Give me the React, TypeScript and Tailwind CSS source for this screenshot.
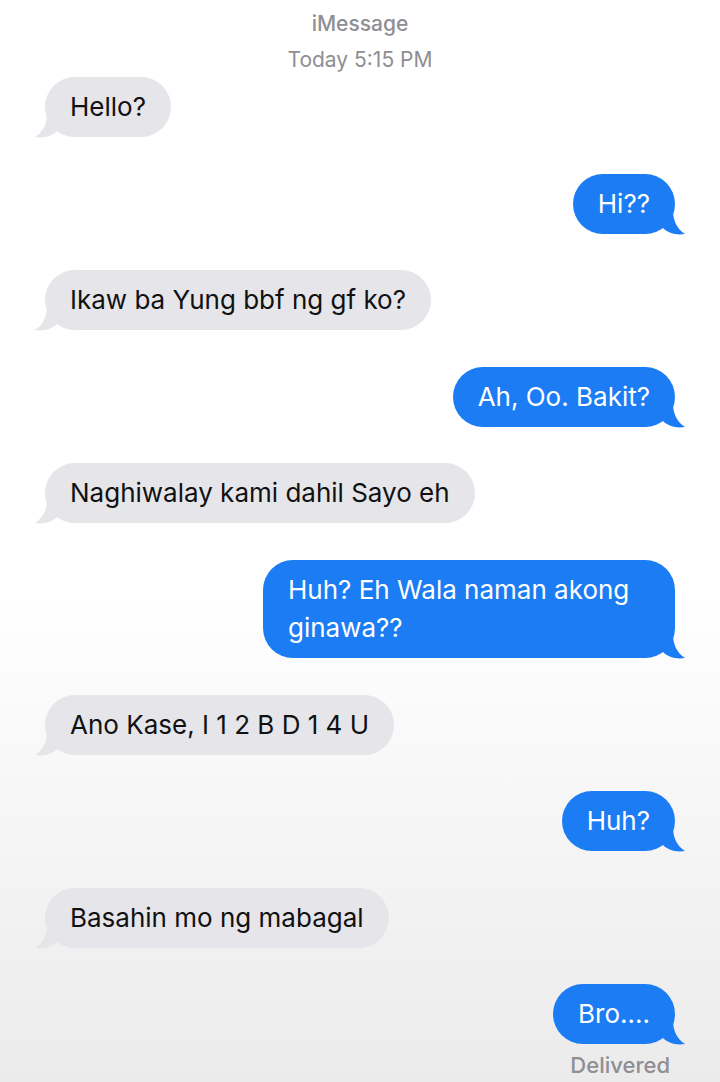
const MESSAGES = [
  { from: "them", text: "Hello?" },
  { from: "me", text: "Hi??" },
  { from: "them", text: "Ikaw ba Yung bbf ng gf ko?" },
  { from: "me", text: "Ah, Oo. Bakit?" },
  { from: "them", text: "Naghiwalay kami dahil Sayo eh" },
  { from: "me", text: "Huh? Eh Wala naman akong ginawa??" },
  { from: "them", text: "Ano Kase, I 1 2 B D 1 4 U" },
  { from: "me", text: "Huh?" },
  { from: "them", text: "Basahin mo ng mabagal" },
  { from: "me", text: "Bro...." },
];

function Tail({ side }: { side: "left" | "right" }) {
  if (side === "left") {
    return (
      <svg
        className="absolute -left-[10px] -bottom-[2px]"
        width="26"
        height="26"
        viewBox="0 0 26 26"
      >
        <path d="M12 0 C12 11 8 19 0 24 C9 25.5 17 23 22 18 L26 0 Z" fill="#e5e5ea" />
      </svg>
    );
  }
  return (
    <svg
      className="absolute -right-[10px] -bottom-[2px]"
      width="26"
      height="26"
      viewBox="0 0 26 26"
    >
      <path d="M14 0 C14 11 18 19 26 24 C17 25.5 9 23 4 18 L0 0 Z" fill="#1b7cf4" />
    </svg>
  );
}

export default function App() {
  return (
    <div
      className="min-h-[1082px] w-[720px] bg-linear-to-b from-white from-55% to-[#ebebeb] pt-[10px]"
      style={{ fontFamily: "Inter, 'Liberation Sans', sans-serif" }}
    >
      {/* Header */}
      <div className="text-center text-[21px] leading-[28px] text-[#8e8e93]">
        <p className="font-medium">iMessage</p>
        <p className="mt-[8px]">Today 5:15 PM</p>
      </div>

      {/* Thread */}
      <div className="mt-[3px] flex flex-col gap-[36.6px] px-[45px]">
        {MESSAGES.map((m, i) =>
          m.from === "them" ? (
            <div key={i} className="flex justify-start">
              <div className="relative max-w-[440px] rounded-[30px] bg-[#e5e5ea] px-[25px] py-[11px] text-[26px] leading-[38px] text-[#111]">
                <Tail side="left" />
                <span className="relative">{m.text}</span>
              </div>
            </div>
          ) : (
            <div key={i} className="flex justify-end">
              <div className="relative max-w-[412px] rounded-[30px] bg-[#1b7cf4] px-[25px] py-[11px] text-[26px] leading-[38px] text-white">
                <Tail side="right" />
                <span className="relative">{m.text}</span>
              </div>
            </div>
          )
        )}
      </div>
      <p className="mt-[8px] pr-[50px] text-right text-[22px] leading-[26px] font-medium text-[#8e8e93]">
        Delivered
      </p>
    </div>
  );
}
